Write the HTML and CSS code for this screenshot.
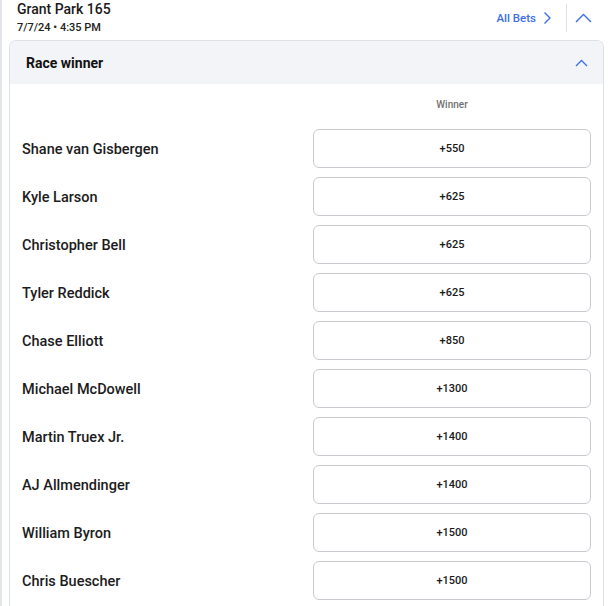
FILE: index.html
```html
<!DOCTYPE html>
<html>
<head>
<meta charset="utf-8">
<link rel="stylesheet" href="styles.css">
</head>
<body>
<div class="page">
  <div class="event-head">
    <div class="event-info">
      <div class="event-title">Grant Park 165</div>
      <div class="event-date">7/7/24 • 4:35 PM</div>
    </div>
    <div class="event-actions">
      <a class="all-bets">All Bets
        <svg class="chev-right" width="9" height="14" viewBox="0 0 9 14"><path d="M1.5 1.5 L7 7 L1.5 12.5" fill="none" stroke="#3d6fe6" stroke-width="1.4"/></svg>
      </a>
      <span class="divider"></span>
      <svg class="chev-up-lg" width="17" height="10" viewBox="0 0 17 10"><path d="M1 9 L8.5 1.5 L16 9" fill="none" stroke="#3d6fe6" stroke-width="1.4"/></svg>
    </div>
  </div>

  <div class="card">
    <div class="card-head">
      <span class="card-title">Race winner</span>
      <svg class="chev-up-sm" width="13" height="8" viewBox="0 0 13 8"><path d="M1 7 L6.5 1.5 L12 7" fill="none" stroke="#3d6fe6" stroke-width="1.3"/></svg>
    </div>
    <div class="card-body">
      <div class="row label-row">
        <span></span>
        <span class="col-label">Winner</span>
      </div>
      <div class="row"><span class="name">Shane van Gisbergen</span><button class="odds">+550</button></div>
      <div class="row"><span class="name">Kyle Larson</span><button class="odds">+625</button></div>
      <div class="row"><span class="name">Christopher Bell</span><button class="odds">+625</button></div>
      <div class="row"><span class="name">Tyler Reddick</span><button class="odds">+625</button></div>
      <div class="row"><span class="name">Chase Elliott</span><button class="odds">+850</button></div>
      <div class="row"><span class="name">Michael McDowell</span><button class="odds">+1300</button></div>
      <div class="row"><span class="name">Martin Truex Jr.</span><button class="odds">+1400</button></div>
      <div class="row"><span class="name">AJ Allmendinger</span><button class="odds">+1400</button></div>
      <div class="row"><span class="name">William Byron</span><button class="odds">+1500</button></div>
      <div class="row"><span class="name">Chris Buescher</span><button class="odds">+1500</button></div>
    </div>
  </div>
</div>
</body>
</html>
```
FILE: styles.css
```css
html, body {
  margin: 0;
  padding: 0;
  background: #fff;
  font-family: Roboto, "Liberation Sans", Arial, sans-serif;
  color: #1a1a1a;
}
.page {
  border-left: 2px solid #e2e5eb;
  min-height: 606px;
  box-sizing: border-box;
  overflow: hidden;
}
.event-head {
  display: flex;
  justify-content: space-between;
  align-items: flex-start;
  height: 40px;
  padding-left: 15px;
  box-sizing: border-box;
}
.event-info {
  padding-top: 1px;
}
.event-title {
  font-size: 14px;
  line-height: 16px;
  font-weight: 500;
  color: #1a1a1a;
}
.event-date {
  font-size: 11px;
  line-height: 14px;
  margin-top: 4px;
  font-weight: 500;
  color: #222;
}
.event-actions {
  display: flex;
  align-items: center;
  height: 28px;
  margin-top: 4px;
  margin-right: 18px;
}
.all-bets {
  display: flex;
  align-items: center;
  gap: 7px;
  font-size: 11.5px;
  font-weight: 500;
  color: #3d6fe6;
}
.divider {
  width: 1px;
  height: 28px;
  background: #dfe1e5;
  margin-left: 14px;
  margin-right: 8px;
}
.chev-up-lg {
  display: block;
}
.card {
  margin: 0 6px 0 7px;
  border: 1px solid #dde0e6;
  border-bottom: none;
  border-radius: 7px 7px 0 0;
  overflow: hidden;
}
.card-head {
  height: 43px;
  background: #f3f4f7;
  display: flex;
  align-items: center;
  justify-content: space-between;
  padding: 0 15px 0 16px;
}
.card-title {
  font-size: 14px;
  font-weight: 700;
  color: #111;
}
.chev-up-sm {
  display: block;
}
.card-body {
  padding: 0 12px 0 12px;
}
.row {
  display: grid;
  grid-template-columns: 1fr 278px;
  align-items: center;
  height: 39px;
  margin-bottom: 9px;
}
.label-row {
  height: 41px;
  margin-bottom: 4px;
}
.col-label {
  text-align: center;
  font-size: 10px;
  font-weight: 500;
  color: #707070;
}
.name {
  font-size: 14.5px;
  font-weight: 500;
  color: #1c1c1c;
  padding-top: 1px;
}
.odds {
  height: 39px;
  border: 1px solid #c8cbd0;
  border-radius: 6px;
  background: #fff;
  font-family: Roboto, "Liberation Sans", Arial, sans-serif;
  font-size: 11px;
  font-weight: 500;
  color: #1a1a1a;
  padding: 0;
}
```
